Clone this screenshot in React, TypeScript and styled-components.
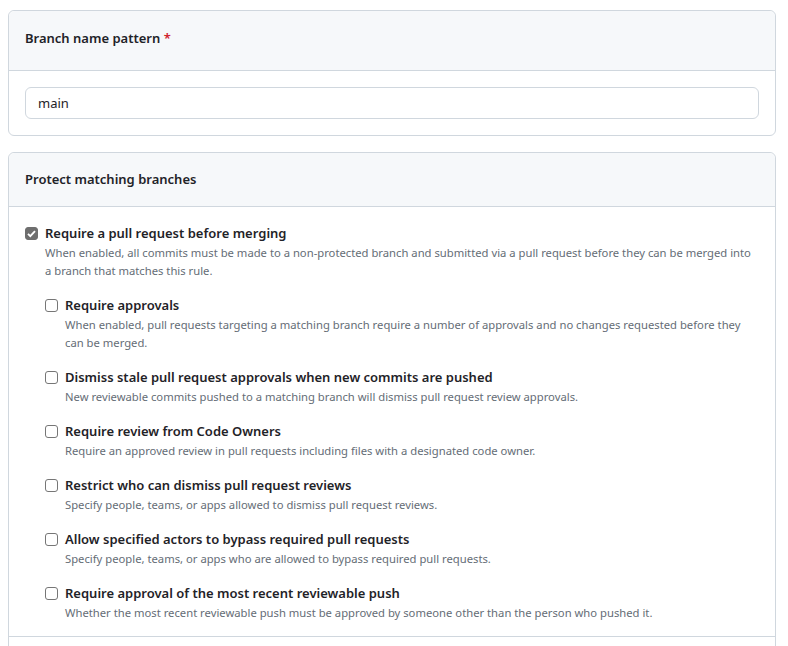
import React from 'react';
import styled, { createGlobalStyle } from 'styled-components';

const GlobalStyle = createGlobalStyle`
  body {
    margin: 0;
    padding: 10px 12px 0 8px;
    background: #ffffff;
    color: #1f2328;
    font-family: "Noto Sans", "Open Sans", "Liberation Sans", sans-serif;
  }
`;

type Rule = {
  title: string;
  description: string;
  checked?: boolean;
};

const mainRule: Rule = {
  title: 'Require a pull request before merging',
  description:
    'When enabled, all commits must be made to a non-protected branch and submitted via a pull request before they can be merged into a branch that matches this rule.',
  checked: true,
};

const subRules: Rule[] = [
  {
    title: 'Require approvals',
    description:
      'When enabled, pull requests targeting a matching branch require a number of approvals and no changes requested before they can be merged.',
  },
  {
    title: 'Dismiss stale pull request approvals when new commits are pushed',
    description: 'New reviewable commits pushed to a matching branch will dismiss pull request review approvals.',
  },
  {
    title: 'Require review from Code Owners',
    description: 'Require an approved review in pull requests including files with a designated code owner.',
  },
  {
    title: 'Restrict who can dismiss pull request reviews',
    description: 'Specify people, teams, or apps allowed to dismiss pull request reviews.',
  },
  {
    title: 'Allow specified actors to bypass required pull requests',
    description: 'Specify people, teams, or apps who are allowed to bypass required pull requests.',
  },
  {
    title: 'Require approval of the most recent reviewable push',
    description: 'Whether the most recent reviewable push must be approved by someone other than the person who pushed it.',
  },
];

function RuleItem({ rule, children }: { rule: Rule; children?: React.ReactNode }) {
  return (
    <Item>
      <Label>
        <Checkbox type="checkbox" defaultChecked={rule.checked} />
        <RuleTitle>{rule.title}</RuleTitle>
      </Label>
      <Description>{rule.description}</Description>
      {children}
    </Item>
  );
}

export default function App() {
  return (
    <>
      <GlobalStyle />
      <Box>
        <BoxHeader $tall>
          <HeaderTitle>
            Branch name pattern <Required>*</Required>
          </HeaderTitle>
        </BoxHeader>
        <BoxBody>
          <TextInput type="text" defaultValue="main" />
        </BoxBody>
      </Box>

      <Box $open>
        <BoxHeader>
          <HeaderTitle>Protect matching branches</HeaderTitle>
        </BoxHeader>
        <RuleList>
          <RuleItem rule={mainRule}>
            <SubList>
              {subRules.map((rule) => (
                <RuleItem key={rule.title} rule={rule} />
              ))}
            </SubList>
          </RuleItem>
        </RuleList>
        <Divider />
        <Rest />
      </Box>
    </>
  );
}

const Box = styled.div<{ $open?: boolean }>`
  width: 768px;
  box-sizing: border-box;
  border: 1px solid #d0d7de;
  border-radius: 6px;
  margin-bottom: 16px;
  ${({ $open }) => $open && 'border-bottom-left-radius: 0; border-bottom-right-radius: 0;'}
`;

const BoxHeader = styled.div<{ $tall?: boolean }>`
  background: #f6f8fa;
  border-bottom: 1px solid #d0d7de;
  border-radius: 6px 6px 0 0;
  padding: ${({ $tall }) => ($tall ? '17px 16px 21px' : '16px')};
`;

const HeaderTitle = styled.h3`
  margin: 0;
  font-size: 13px;
  line-height: 21px;
  font-weight: 600;
`;

const Required = styled.span`
  color: #cf222e;
`;

const BoxBody = styled.div`
  padding: 16px;
`;

const TextInput = styled.input`
  display: block;
  width: 100%;
  box-sizing: border-box;
  height: 32px;
  padding: 0 12px;
  border: 1px solid #d0d7de;
  border-radius: 6px;
  font-family: inherit;
  font-size: 13px;
  color: #1f2328;
  outline: none;
`;

const RuleList = styled.div`
  padding: 16px 16px 14px;
`;

const SubList = styled.div`
  margin-top: 15px;
  padding-left: 20px;
  display: flex;
  flex-direction: column;
  gap: 15px;
`;

const Item = styled.div`
  display: flex;
  flex-direction: column;
`;

const Label = styled.label`
  display: flex;
  align-items: center;
  gap: 7px;
  height: 21px;
`;

const Checkbox = styled.input`
  appearance: none;
  margin: 0;
  width: 13px;
  height: 13px;
  flex: none;
  border: 1px solid #767676;
  border-radius: 3px;
  background: #ffffff;
  box-sizing: border-box;

  &:checked {
    border-color: #6e6e6e;
    background: #6e6e6e
      url("data:image/svg+xml,%3Csvg xmlns='http://www.w3.org/2000/svg' viewBox='0 0 13 13'%3E%3Cpath d='M3 6.8l2.3 2.3L10 4.2' fill='none' stroke='white' stroke-width='1.9'/%3E%3C/svg%3E")
      center / 13px 13px no-repeat;
  }
`;

const RuleTitle = styled.span`
  font-size: 13px;
  font-weight: 600;
  line-height: 21px;
`;

const Description = styled.p`
  margin: 0;
  padding-left: 20px;
  font-size: 11.25px;
  line-height: 18px;
  color: #656d76;
`;

const Divider = styled.hr`
  margin: 0;
  border: 0;
  border-top: 1px solid #d0d7de;
`;

const Rest = styled.div`
  height: 40px;
`;
